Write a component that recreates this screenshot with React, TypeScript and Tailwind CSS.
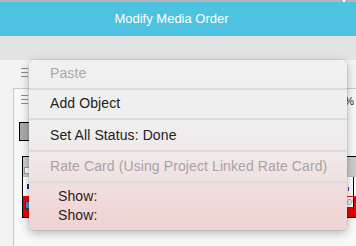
import React from "react";

function Hamburger() {
  return (
    <div className="flex h-[9px] w-[7px] flex-col justify-between">
      <div className="h-px w-full bg-[#8c8c8c]" />
      <div className="h-px w-full bg-[#8c8c8c]" />
      <div className="h-px w-full bg-[#8c8c8c]" />
    </div>
  );
}

function Sep() {
  return <div className="h-[2px] w-full bg-[#dcdadb]" />;
}

export default function App() {
  return (
    <div
      className="relative flex h-[246px] w-[356px] flex-col overflow-hidden bg-[#f3f3f3]"
      style={{ fontFamily: '"Liberation Sans", Arial, sans-serif' }}
    >
      {/* clipped strip above header */}
      <div className="relative flex h-[2px] shrink-0 overflow-hidden bg-[#b5b5b5]">
        <div className="ml-[62px] mt-[-10px] text-[12px] leading-[12px] text-white">Invoice Status</div>
        <div className="ml-[60px] mt-[-10px] text-[12px] leading-[12px] text-white">Invoice Number</div>
        <div className="ml-auto mr-[11px] h-[2px] w-[2px] bg-white" />
      </div>

      {/* header */}
      <div className="flex h-[34px] shrink-0 items-center justify-center bg-[#4ec3e1] pr-[13px] text-[13px] text-white">
        Modify Media Order
      </div>

      {/* toolbar band */}
      <div className="h-[24px] shrink-0 bg-[#e3e3e3]" />

      {/* content */}
      <div className="flex flex-1 flex-col pt-[8px]">
        <div className="ml-[21px]">
          <Hamburger />
        </div>

        <div className="ml-[13px] mt-[11px] flex flex-1 flex-col border-l border-t border-[#c8c8c8] bg-[#f8f8f8]">
          <div className="flex items-start justify-between pt-[6px]">
            <div className="ml-[7px]">
              <Hamburger />
            </div>
            <div className="mr-[2px] mt-[1px] text-[11px] leading-[11px] text-[#1a2040]">100%</div>
          </div>

          <div className="ml-[5px] mt-[15px] h-[19px] w-[60px] border border-black bg-[#a9a9a9]" />

          {/* table 1 */}
          <div className="ml-[8px] mt-[15px] flex flex-col border-b border-l border-t border-black">
            <div className="flex h-[19px] bg-[#cbcbcb]">
              <div className="ml-[1px] mt-[10px] h-[7px] w-[6px] border border-[#9a9a9a] bg-white" />
            </div>
            <div className="flex h-[20px] border-t border-[#bdbdbd] bg-white">
              <div className="ml-[4px] mt-[7px] h-[5px] w-[3px] bg-[#1b2a8c]" />
              <div className="flex-1" />
              <div className="w-[6px]">
                <div className="ml-[1px] mt-[10px] h-[4px] w-[1px] bg-[#5a3aa0]" />
              </div>
              <div className="w-[3px] border-l border-black" />
            </div>
            <div className="flex h-[21px] bg-[#e80000]">
              <div className="ml-[2px] mt-[5px] h-[8px] w-[6px] border border-[#1a3a6a] bg-[#4a8ac8]" />
              <div className="flex-1" />
              <div className="flex w-[6px] flex-col">
                <div className="mt-[1px] h-[10px] overflow-hidden bg-white text-right text-[9px] leading-[10px] text-[#9a9a9a]">
                  0%
                </div>
              </div>
              <div className="w-[3px] border-l border-black" />
            </div>
          </div>

          {/* table 2 */}
          <div className="ml-[8px] mt-[30px] flex h-[10px] border-t border-black">
            <div className="w-[21px]" />
            <div className="flex-1 border-l border-black" />
          </div>
        </div>
      </div>

      {/* context menu */}
      <div
        className="absolute left-[29px] top-[60px] flex h-[170px] w-[318px] flex-col overflow-hidden rounded-[5px] text-[14px] tracking-[0.1px] shadow-[0_3px_10px_rgba(0,0,0,0.28),0_0_0_0.5px_rgba(0,0,0,0.12)]"
        style={{
          background:
            "linear-gradient(to bottom, #f0f0f0 0%, #efeeee 40%, #f0e9e9 55%, #f0e2e2 68%, #f0d8d8 85%, #f0d3d3 100%)",
        }}
      >
        <div className="flex h-[28px] items-center pb-[2px] pl-[21px] text-[#aaaaaa]">Paste</div>
        <Sep />
        <div className="flex h-[28px] items-center pb-[1px] pl-[21px] text-[#222222]">Add Object</div>
        <Sep />
        <div className="flex h-[30px] items-center pl-[21px] text-[#222222]">Set All Status: Done</div>
        <Sep />
        <div className="flex h-[29px] items-center pl-[21px] text-[#a9a3a3]">
          Rate Card (Using Project Linked Rate Card)
        </div>
        <Sep />
        <div className="flex flex-col pl-[29px] pt-[4px] leading-[19px] text-[#2a1e1e]">
          <div>Show:</div>
          <div>Show:</div>
        </div>
      </div>
    </div>
  );
}
